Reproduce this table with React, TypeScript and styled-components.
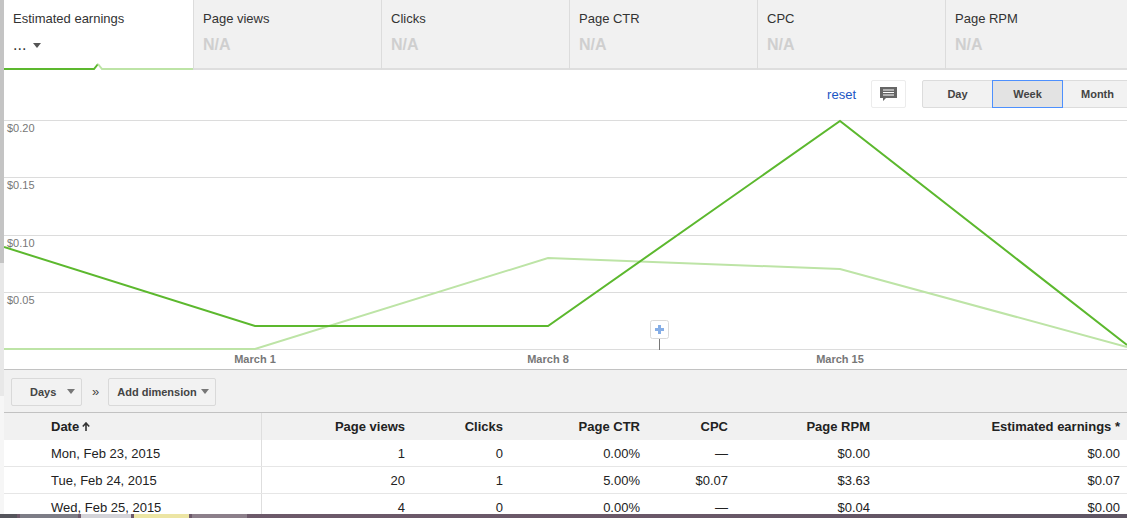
import React from "react";
import styled, { createGlobalStyle } from "styled-components";

const Global = createGlobalStyle`
  html, body { margin: 0; padding: 0; background: #fff; overflow: hidden; }
  body { font-family: "Liberation Sans", Arial, sans-serif; color: #222; }
  * { box-sizing: border-box; }
`;

const Page = styled.div`
  display: flex;
  width: 1134px;
  height: 518px;
  overflow: hidden;
`;

const Gutter = styled.div`
  flex: 0 0 4px;
  background: linear-gradient(
    to bottom,
    #c4c4c4 0px,
    #c4c4c4 263px,
    #e8e8e8 263px,
    #e8e8e8 396px,
    #f6f6f6 396px
  );
`;

const Main = styled.div`
  flex: 0 0 1130px;
  display: flex;
  flex-direction: column;
  & > * { flex-shrink: 0; }
`;

/* ---------- metric tabs ---------- */
const Tabs = styled.div`
  display: grid;
  grid-template-columns: repeat(6, 1fr);
  height: 70px;
`;

const Tab = styled.div<{ $active?: boolean }>`
  display: flex;
  flex-direction: column;
  height: 70px;
  padding: 11px 0 0 9px;
  background: ${(p) => (p.$active ? "#fff" : "#f1f1f1")};
  border-right: 1px solid #dcdcdc;
  border-bottom: ${(p) => (p.$active ? "none" : "2px solid #dedede")};
`;

const TabLabel = styled.div`
  font-size: 13px;
  line-height: 16px;
  color: #333;
  white-space: nowrap;
`;

const TabValue = styled.div`
  margin-top: 9px;
  font-size: 16px;
  line-height: 18px;
  font-weight: bold;
  color: #cfcfcf;
`;

const Ellipsis = styled.div`
  margin-top: 9px;
  display: flex;
  align-items: center;
  gap: 7px;
  font-size: 16px;
  line-height: 18px;
  color: #333;
`;

const Indicator = styled.svg`
  display: block;
  margin-top: auto;
  margin-left: -9px;
`;

/* ---------- chart ---------- */
const ChartSection = styled.div`
  display: flex;
  flex-direction: column;
  border-bottom: 1px solid #c2c2c2;
`;

const ChartControls = styled.div`
  display: flex;
  align-items: center;
  justify-content: flex-end;
  height: 40px;
  padding: 10px 1px 2px 0;
`;

const ResetLink = styled.a`
  font-size: 13px;
  color: #1a55c4;
  text-decoration: none;
  margin-right: 15px;
`;

const IconButton = styled.div`
  width: 35px;
  height: 28px;
  display: flex;
  align-items: center;
  justify-content: center;
  border: 1px solid #ececec;
  border-radius: 2px;
  background: #fff;
  margin-right: 16px;
`;

const Segmented = styled.div`
  display: flex;
`;

const Segment = styled.div<{ $selected?: boolean }>`
  width: 71px;
  height: 28px;
  display: flex;
  align-items: center;
  justify-content: center;
  font-size: 11px;
  font-weight: bold;
  color: #444;
  background: ${(p) => (p.$selected ? "#e3e3e3" : "#f2f2f2")};
  border: 1px solid ${(p) => (p.$selected ? "#4d90fe" : "#dcdcdc")};
  margin-left: ${(p) => (p.$selected ? "-1px" : "0")};
  margin-right: ${(p) => (p.$selected ? "-1px" : "0")};
  position: relative;
  z-index: ${(p) => (p.$selected ? 1 : 0)};
  &:first-child { border-radius: 2px 0 0 2px; }
`;

const ChartSvg = styled.svg`
  display: block;
`;

/* ---------- toolbar ---------- */
const Toolbar = styled.div`
  display: flex;
  align-items: center;
  height: 43px;
  padding: 1px 7px 0;
  background: #f1f1f1;
  border-bottom: 1px solid #c2c2c2;
`;

const DropButton = styled.div<{ $w: number; $pl: number }>`
  width: ${(p) => p.$w}px;
  height: 28px;
  display: flex;
  align-items: center;
  justify-content: space-between;
  padding: 0 6px 0 ${(p) => p.$pl}px;
  border: 1px solid #d9d9d9;
  border-radius: 2px;
  background: #f2f2f2;
  font-size: 11px;
  font-weight: bold;
  color: #444;
`;

const Chevrons = styled.span`
  margin: 0 9px 0 10px;
  font-size: 13px;
  color: #444;
`;

/* ---------- table ---------- */
const cols = "258px 143px 98px 137px 88px 142px 1fr";

const HeaderRow = styled.div`
  display: grid;
  grid-template-columns: ${cols};
  height: 27px;
  background: #f1f1f1;
  font-size: 13px;
  font-weight: bold;
  color: #222;
`;

const Row = styled.div`
  display: grid;
  grid-template-columns: ${cols};
  height: 27px;
  border-bottom: 1px solid #e6e6e6;
  background: #fff;
  font-size: 13px;
  color: #222;
`;

const Cell = styled.div<{ $first?: boolean; $last?: boolean }>`
  display: flex;
  align-items: center;
  justify-content: ${(p) => (p.$first ? "flex-start" : "flex-end")};
  padding-left: ${(p) => (p.$first ? "47px" : "0")};
  padding-right: ${(p) => (p.$last ? "14px" : "0")};
  border-right: ${(p) => (p.$first ? "1px solid #dedede" : "none")};
  white-space: nowrap;
  gap: 3px;
`;

/* ---------- taskbar ---------- */
const Taskbar = styled.div`
  position: fixed;
  left: 0;
  right: 0;
  bottom: 0;
  height: 4px;
  display: flex;
  background: linear-gradient(to right, #6e5a6b, #6a5868 60%, #5e5563);
`;

const TaskItem = styled.div<{ $c: string; $w: number }>`
  width: ${(p) => p.$w}px;
  margin-right: 3px;
  background: ${(p) => p.$c};
`;

const metrics = ["Page views", "Clicks", "Page CTR", "CPC", "Page RPM"];

const rows = [
  ["Mon, Feb 23, 2015", "1", "0", "0.00%", "—", "$0.00", "$0.00"],
  ["Tue, Feb 24, 2015", "20", "1", "5.00%", "$0.07", "$3.63", "$0.07"],
  ["Wed, Feb 25, 2015", "4", "0", "0.00%", "—", "$0.04", "$0.00"],
];

const headers = ["Page views", "Clicks", "Page CTR", "CPC", "Page RPM", "Estimated earnings *"];

const Caret = ({ color = "#555" }: { color?: string }) => (
  <svg width="8" height="5" viewBox="0 0 8 5">
    <path d="M0 0 H8 L4 5 Z" fill={color} />
  </svg>
);

const gridYs = [10, 67, 125, 182, 239];
const yLabels = ["$0.20", "$0.15", "$0.10", "$0.05"];

export default function App() {
  return (
    <>
      <Global />
      <Page>
        <Gutter />
        <Main>
          <Tabs>
            <Tab $active>
              <TabLabel>Estimated earnings</TabLabel>
              <Ellipsis>
                <span>...</span>
                <Caret color="#555" />
              </Ellipsis>
              <Indicator width="189" height="8" viewBox="0 0 189 8">
                <path d="M0 7 H90 L94 2" stroke="#5cb82e" strokeWidth="2" fill="none" />
                <path d="M94 2 L98 7 H189" stroke="#bde4a6" strokeWidth="2" fill="none" />
              </Indicator>
            </Tab>
            {metrics.map((m) => (
              <Tab key={m}>
                <TabLabel>{m}</TabLabel>
                <TabValue>N/A</TabValue>
              </Tab>
            ))}
          </Tabs>

          <ChartSection>
            <ChartControls>
              <ResetLink href="#">reset</ResetLink>
              <IconButton>
                <svg width="18" height="15" viewBox="0 0 18 15">
                  <path d="M0 0 H17 V11 H6 L3 14 V11 H0 Z" fill="#666" />
                  <path d="M3 3 H14 M3 5.5 H14 M3 8 H14" stroke="#fff" strokeWidth="1" />
                </svg>
              </IconButton>
              <Segmented>
                <Segment>Day</Segment>
                <Segment $selected>Week</Segment>
                <Segment>Month</Segment>
              </Segmented>
            </ChartControls>
            <ChartSvg width="1130" height="259" viewBox="0 0 1130 259">
              {gridYs.map((y) => (
                <line key={y} x1="0" x2="1130" y1={y + 0.5} y2={y + 0.5} stroke="#dcdcdc" strokeWidth="1" />
              ))}
              {yLabels.map((l, i) => (
                <text
                  key={l}
                  x="3"
                  y={gridYs[i] + 12}
                  fontSize="11"
                  fill="#777"
                  fontFamily="Liberation Sans, Arial, sans-serif"
                >
                  {l}
                </text>
              ))}
              <polyline
                points="0,239 251,239 544,148 836,159 1123,237"
                fill="none"
                stroke="#bde4a6"
                strokeWidth="2"
              />
              <polyline
                points="0,137 251,216 544,216 836,11 1123,235"
                fill="none"
                stroke="#5cb82e"
                strokeWidth="2"
              />
              {[
                [251, "March 1"],
                [544, "March 8"],
                [836, "March 15"],
              ].map(([x, t]) => (
                <text
                  key={t as string}
                  x={x as number}
                  y="253"
                  textAnchor="middle"
                  fontSize="11"
                  fontWeight="bold"
                  fill="#777"
                  fontFamily="Liberation Sans, Arial, sans-serif"
                >
                  {t}
                </text>
              ))}
              <line x1="655.5" x2="655.5" y1="229" y2="240" stroke="#777" strokeWidth="1" />
              <rect x="646.5" y="210.5" width="18" height="18" rx="2" fill="#fff" stroke="#dadada" />
              <path d="M655.5 215 V224 M651 219.5 H660" stroke="#86aee6" strokeWidth="3" />
            </ChartSvg>
          </ChartSection>

          <Toolbar>
            <DropButton $w={71} $pl={18}>
              <span>Days</span>
              <Caret color="#777" />
            </DropButton>
            <Chevrons>»</Chevrons>
            <DropButton $w={108} $pl={8}>
              <span>Add dimension</span>
              <Caret color="#777" />
            </DropButton>
          </Toolbar>

          <HeaderRow>
            <Cell $first>
              Date
              <svg width="8" height="9" viewBox="0 0 8 9">
                <path d="M4 1 V9 M0.8 4.5 L4 1 L7.2 4.5" stroke="#333" strokeWidth="1.6" fill="none" />
              </svg>
            </Cell>
            {headers.map((h, i) => (
              <Cell key={h} $last={i === headers.length - 1}>
                {h}
              </Cell>
            ))}
          </HeaderRow>
          {rows.map((r) => (
            <Row key={r[0]}>
              {r.map((v, i) => (
                <Cell key={i} $first={i === 0} $last={i === r.length - 1}>
                  {v}
                </Cell>
              ))}
            </Row>
          ))}
        </Main>
      </Page>
      <Taskbar>
        <TaskItem $c="#55555c" $w={17} />
        <TaskItem $c="#7d7d86" $w={58} />
        <TaskItem $c="#d3d3d8" $w={50} />
        <TaskItem $c="#ece5a4" $w={55} />
        <TaskItem $c="#8c7f8a" $w={55} />
      </Taskbar>
    </>
  );
}
